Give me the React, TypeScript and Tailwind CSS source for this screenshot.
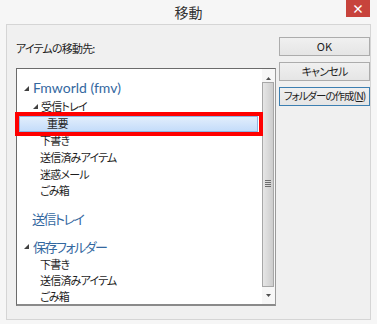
const font = { fontFamily: '"Noto Sans CJK JP", "Noto Sans", sans-serif' };
const latin = { fontFamily: 'Lato, "Noto Sans CJK JP", sans-serif' };

function Caret() {
  return (
    <svg width="5" height="5" viewBox="0 0 5 5" className="shrink-0">
      <polygon points="5,0 5,5 0,5" fill="#404040" />
    </svg>
  );
}

function Row({ children, h = "h-[17px]" }: { children: React.ReactNode; h?: string }) {
  return (
    <div className={`${h} flex items-center pl-[23px] text-[11px] tracking-[-0.8px] text-[#1e1e1e] leading-none whitespace-nowrap`}>
      {children}
    </div>
  );
}

function Scrollbar() {
  return (
    <div className="w-[13px] shrink-0 flex flex-col items-center bg-[#f7f7f7]">
      <div className="h-[13px] flex items-end justify-center pb-[2px]">
        <svg width="5" height="3" viewBox="0 0 5 3">
          <polygon points="2.5,0 5,3 0,3" fill="#505050" />
        </svg>
      </div>
      <div className="w-[12px] h-[205px] ml-[-1px] border border-[#a7a7a7] bg-gradient-to-r from-[#e6e6e6] to-[#cdcdcd] flex flex-col items-center justify-center gap-[1px] pb-[2px]">
        <span className="w-[6px] h-px bg-[#6e6e6e]" />
        <span className="w-[6px] h-px bg-[#6e6e6e]" />
        <span className="w-[6px] h-px bg-[#6e6e6e]" />
        <span className="w-[6px] h-px bg-[#6e6e6e]" />
      </div>
      <div className="flex-1 flex items-center justify-center">
        <svg width="5" height="3" viewBox="0 0 5 3">
          <polygon points="0,0 5,0 2.5,3" fill="#505050" />
        </svg>
      </div>
    </div>
  );
}

const btn =
  "w-[91px] h-[19px] border bg-gradient-to-b from-[#f0f0f0] to-[#e5e5e5] text-[#1e1e1e] leading-none whitespace-nowrap flex items-center justify-center";

export default function App() {
  return (
    <div className="w-[377px] h-[324px] bg-[#f6f6f6] flex flex-col [font-feature-settings:'palt']" style={font}>
      {/* Title bar */}
      <div className="relative h-[24px] flex items-center justify-center text-[14px] text-[#333]">
        移動
        <div className="absolute top-0 right-[7px] w-[24px] h-[17px] bg-[#c7433c] flex items-center justify-center text-white text-[12px] font-bold leading-none">
          ×
        </div>
      </div>

      {/* Client area */}
      <div className="mx-[6px] h-[296px] border border-[#d5d5d5] bg-[#f0f0f0] flex">
        <div className="w-[270px] pl-[9px] flex flex-col">
          <div className="h-[36px] flex items-end pb-[5px] text-[11px] tracking-[-0.8px] text-[#1e1e1e]">
            アイテムの移動先:
          </div>
          <div className="mt-[7px] w-[260px] h-[238px] bg-white border-t border-l border-[#6b6b6b] border-r border-b-2 border-r-[#9a9a9a] border-b-[#8a8a8a] flex">
            <div className="flex-1 flex flex-col pt-[10px]">
              <div className="h-[19px] flex items-center gap-[4px] pl-[7px] text-[14px] text-[#34689f] leading-none" style={latin}>
                <Caret />
                <span>Fmworld (fmv)</span>
              </div>
              <div className="h-[17px] flex items-center gap-[3px] pl-[16px] text-[11px] tracking-[-0.8px] text-[#1e1e1e] leading-none">
                <Caret />
                <span>受信トレイ</span>
              </div>
              <div className="relative h-[17px] z-10">
                <div className="absolute left-[2px] right-[4px] top-[1px] bottom-0 border border-[#8fb4e3] bg-gradient-to-b from-[#e2eefc] to-[#c4dcfa] flex items-center pl-[27px] text-[11px] tracking-[-0.5px] text-[#1e1e1e] leading-none">
                  重要
                </div>
                <span className="absolute left-[-2px] right-[-1px] top-[-3px] bottom-[-4px] border-4 border-[#ff0000]" />
              </div>
              <Row>下書き</Row>
              <Row>送信済みアイテム</Row>
              <Row>迷惑メール</Row>
              <Row>ごみ箱</Row>
              <div className="mt-[9px] h-[20px] flex items-center pl-[15px] text-[13px] tracking-[-1.5px] text-[#34689f] leading-none">
                送信トレイ
              </div>
              <div className="mt-[9px] h-[19px] flex items-center gap-[4px] pl-[7px] text-[13px] tracking-[-1.5px] text-[#34689f] leading-none whitespace-nowrap">
                <Caret />
                <span>保存フォルダー</span>
              </div>
              <Row h="h-[16px]">下書き</Row>
              <Row h="h-[16px]">送信済みアイテム</Row>
              <Row h="h-[16px]">ごみ箱</Row>
            </div>
            <Scrollbar />
          </div>
        </div>

        <div className="flex flex-col gap-[6px] pt-[12px] pl-[2px]">
          <button className={`${btn} border-[#acacac] text-[11px]`}>OK</button>
          <button className={`${btn} border-[#acacac] text-[11px] tracking-[-0.8px]`}>キャンセル</button>
          <button className={`${btn} border-[#3c7fb1] text-[10.5px] tracking-[-1px]`}>
            フォルダーの作成(<span className="underline">N</span>)
          </button>
        </div>
      </div>
    </div>
  );
}
